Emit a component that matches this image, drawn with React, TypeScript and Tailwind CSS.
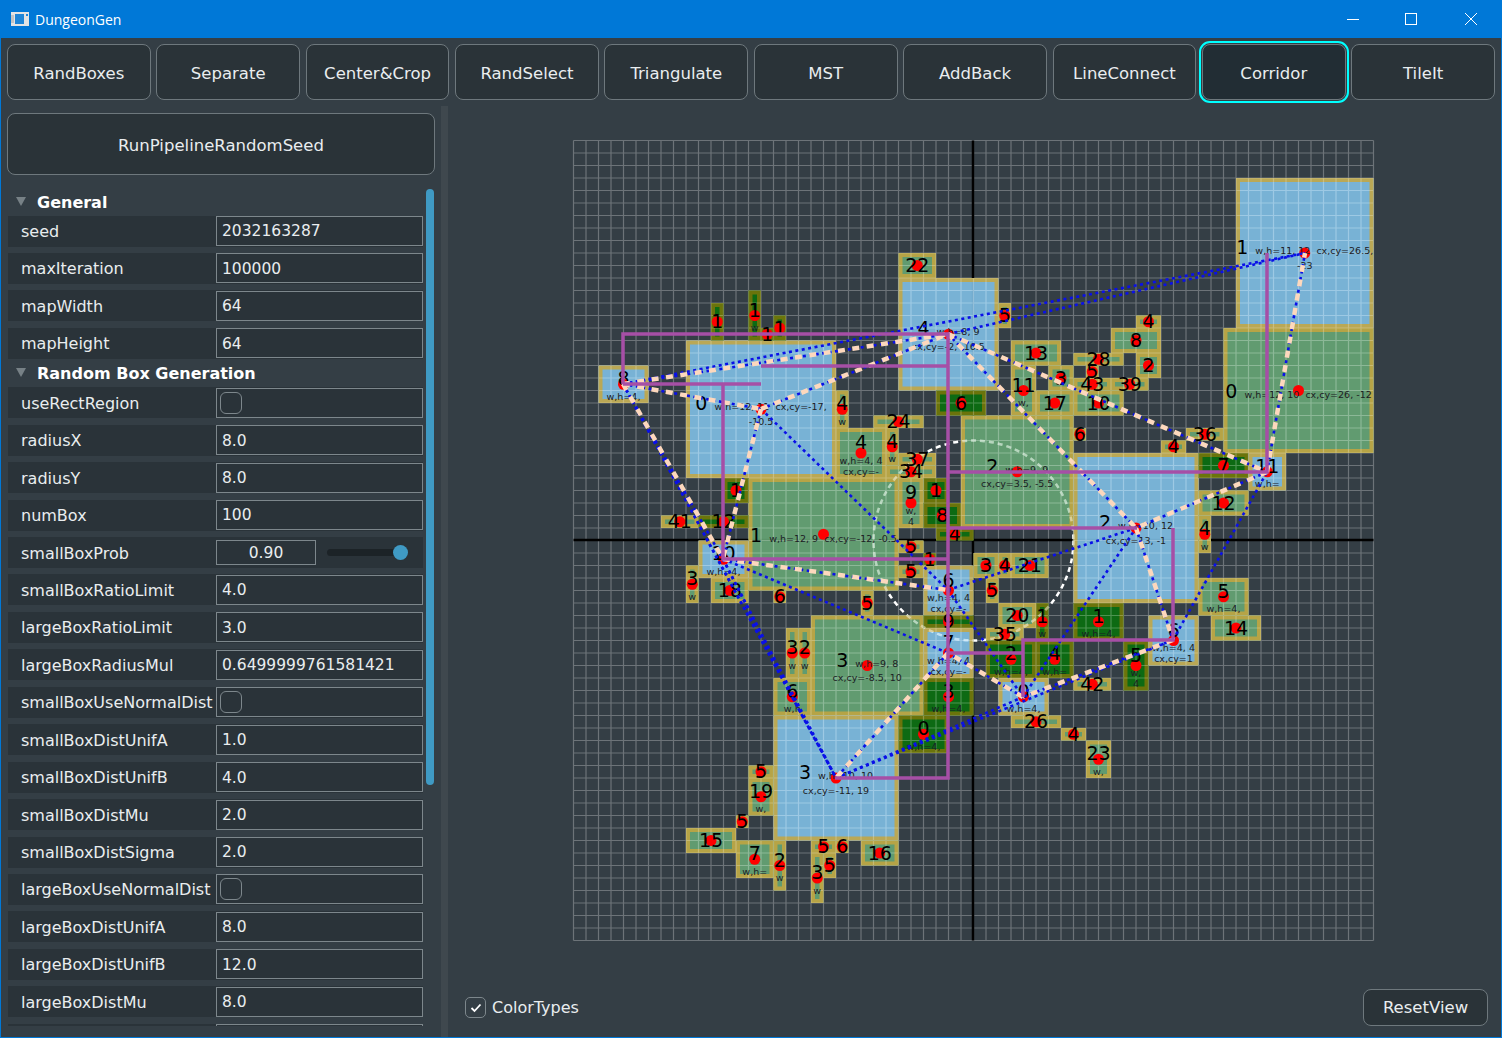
import React from "react";

const U = 12.5;
const X = (u: number) => 973.5 + u * U;
const Y = (u: number) => 540.5 + u * U;

type Kind = "B" | "G" | "D";
type Box = [number, number, number, number, Kind, string, string?, string[]?];

// x, y, w, h in grid cells, kind, big label, small text on the same line, further small lines
const BOXES: Box[] = [
  [21, -29, 11, 12, "B", "1", "w,h=11, 12\u00a0 cx,cy=26.5,", ["-23"]],
  [20, -17, 12, 10, "G", "0", "w,h=12, 10\u00a0 cx,cy=26, -12"],
  [-6, -21, 8, 9, "B", "4", "w,h=8, 9", ["cx,cy=-2, -16.5"]],
  [-23, -16, 12, 11, "B", "0", "w,h=12, 11\u00a0 cx,cy=-17,", ["-10.5"]],
  [-18, -5, 12, 9, "G", "1", "w,h=12, 9\u00a0 cx,cy=-12, -0.5"],
  [-1, -10, 9, 9, "G", "2", "w,h=9, 9", ["cx,cy=3.5, -5.5"]],
  [8, -7, 10, 12, "B", "2", "w,h=10, 12", ["cx,cy=13, -1"]],
  [-13, 6, 9, 8, "G", "3", "w,h=9, 8", ["cx,cy=-8.5, 10"]],
  [-16, 14, 10, 10, "B", "3", "w,h=10, 10", ["cx,cy=-11, 19"]],
  [-6, -23, 3, 2, "G", "22"],
  [-21, -19, 1, 3, "D", "1"],
  [-18, -20, 1, 4, "D", "1", undefined, ["w"]],
  [-17, -17, 1, 1, "D", "1"],
  [-16, -18, 1, 2, "D", "1"],
  [-30, -14, 4, 3, "B", "8", undefined, ["w,h=4,"]],
  [-11, -12, 1, 3, "G", "4", undefined, ["w"]],
  [-8, -10, 4, 1, "G", "24"],
  [-11, -9, 4, 4, "G", "4", undefined, ["w,h=4, 4", "cx,cy=-"]],
  [-7, -9, 1, 3, "G", "4", undefined, ["w"]],
  [-6, -7, 3, 1, "G", "37"],
  [-7, -6, 4, 1, "G", "34"],
  [-4, -5, 2, 2, "D", "1"],
  [-6, -5, 2, 4, "G", "9", undefined, ["w,", "4"]],
  [-4, -3, 3, 2, "D", "8"],
  [-3, -12, 4, 2, "D", "6"],
  [-3, -1, 3, 1, "D", "4"],
  [-20, -5, 2, 2, "D", "1"],
  [-25, -2, 3, 1, "G", "41"],
  [-22, -2, 4, 1, "D", "12"],
  [-22, 0, 4, 3, "B", "10", undefined, ["w,h=4,"]],
  [-23, 2, 1, 3, "G", "3", undefined, ["w"]],
  [-21, 3, 3, 2, "G", "18"],
  [-16, 4, 1, 1, "G", "6"],
  [-9, 4, 1, 2, "G", "5"],
  [-6, 0, 2, 1, "G", "5"],
  [-4, 1, 1, 1, "D", "1"],
  [-6, 2, 2, 1, "G", "5"],
  [-4, 2, 4, 4, "B", "6", undefined, ["w,h=4, 4", "cx,cy=-"]],
  [-4, 6, 4, 1, "D", "9"],
  [-4, 7, 4, 4, "B", "7", undefined, ["w,h=4, 4", "cx,cy=-"]],
  [-4, 11, 4, 3, "D", "3", undefined, ["w,h=4,"]],
  [-6, 14, 4, 3, "D", "0", undefined, ["w,h=4,"]],
  [-15, 7, 1, 4, "G", "3", undefined, ["w"]],
  [-14, 7, 1, 4, "G", "2", undefined, ["w"]],
  [-16, 11, 3, 3, "G", "6", undefined, ["w,h"]],
  [-18, 18, 2, 1, "G", "5"],
  [-18, 19, 2, 3, "G", "19", undefined, ["w,"]],
  [-19, 22, 1, 1, "G", "5"],
  [-23, 23, 4, 2, "G", "15"],
  [-19, 24, 3, 3, "G", "7", undefined, ["w,h="]],
  [-16, 24, 1, 4, "G", "2", undefined, ["w"]],
  [-13, 24, 2, 1, "G", "5"],
  [-11, 24, 1, 1, "G", "6"],
  [-9, 24, 3, 2, "G", "16"],
  [-12, 25, 1, 2, "G", "5"],
  [-13, 25, 1, 4, "G", "3", undefined, ["w"]],
  [2, -19, 1, 2, "G", "5"],
  [3, -16, 4, 2, "G", "13"],
  [3, -14, 2, 4, "G", "11", undefined, ["w,"]],
  [6, -14, 2, 2, "G", "3"],
  [5, -12, 3, 2, "G", "17"],
  [8, -15, 4, 1, "G", "28"],
  [9, -14, 1, 1, "G", "5"],
  [8, -13, 3, 1, "G", "43"],
  [11, -13, 3, 1, "G", "39"],
  [8, -12, 4, 2, "G", "10"],
  [13, -18, 2, 1, "G", "4"],
  [11, -17, 4, 2, "G", "8"],
  [13, -15, 2, 2, "G", "2"],
  [8, -9, 1, 1, "G", "6"],
  [15, -8, 2, 1, "G", "4"],
  [17, -9, 3, 1, "G", "36"],
  [18, -7, 4, 2, "D", "7"],
  [22, -7, 3, 3, "B", "11", undefined, ["w,h="]],
  [18, -4, 4, 2, "G", "12"],
  [18, -2, 1, 3, "G", "4", undefined, ["w"]],
  [0, 1, 2, 2, "G", "3"],
  [2, 1, 1, 2, "G", "4"],
  [3, 1, 3, 2, "G", "21"],
  [1, 3, 1, 2, "G", "5"],
  [2, 5, 3, 2, "G", "20"],
  [5, 5, 1, 3, "D", "1", undefined, ["w"]],
  [1, 7, 3, 1, "G", "35"],
  [8, 5, 4, 3, "D", "1", undefined, ["w,h=4,"]],
  [1, 8, 4, 3, "D", "2", undefined, ["w,h=4,"]],
  [5, 8, 3, 3, "D", "4", undefined, ["w,h="]],
  [2, 11, 4, 3, "B", "0", undefined, ["w,h=4,"]],
  [3, 14, 4, 1, "G", "26"],
  [8, 11, 3, 1, "G", "42"],
  [7, 15, 2, 1, "G", "4"],
  [9, 16, 2, 3, "G", "23", undefined, ["w,"]],
  [12, 8, 2, 4, "D", "5", undefined, ["w,", "4"]],
  [14, 6, 4, 4, "B", "6", undefined, ["w,h=4, 4", "cx,cy=1"]],
  [18, 3, 4, 3, "G", "5", undefined, ["w,h=4,"]],
  [19, 6, 4, 2, "G", "14"],
];

const FILL: Record<Kind, string> = { B: "rgb(130,195,233)", G: "rgb(104,168,118)", D: "rgb(8,113,12)" };
const EDGE: Record<Kind, string> = { B: "rgb(198,166,62)", G: "rgb(198,166,62)", D: "rgb(125,118,10)" };

type Pt = [number, number];
const n8: Pt = [623, 384];
const n0: Pt = [761, 409];
const n4: Pt = [948, 334];
const n1: Pt = [1305, 253];
const n11: Pt = [1267, 472];
const n2: Pt = [1136, 528];
const n6r: Pt = [1173, 640];
const n0b: Pt = [1023, 697];
const n7: Pt = [948, 653];
const n6m: Pt = [948, 590];
const n3: Pt = [836, 778];
const n6l: Pt = [792, 697];
const n10: Pt = [723, 559];

const BLUE_EDGES: [Pt, Pt][] = [
  [n8, n1], [n8, n4], [n4, n1], [n8, n0], [n0, n4], [n0, n10], [n0, n6m], [n8, n10], [n8, n3], [n8, n6l],
  [n10, n3], [n10, n6l], [n6l, n3], [n4, n2], [n4, n11], [n11, n1], [n11, n2], [n2, n6r], [n6r, n0b], [n0b, n7],
  [n7, n3], [n10, n6m], [n10, n7], [n3, n0b], [n3, n6r], [n0b, n2], [n6r, n11], [n6m, n2], [n6m, n0b],
];

const MST_EDGES: [Pt, Pt][] = [
  [n8, n4], [n8, n0], [n0, n4], [n0, n10], [n8, n10], [n4, n2], [n4, n11], [n11, n1], [n11, n2], [n2, n6r],
  [n6r, n0b], [n0b, n7], [n7, n3], [n10, n6m],
];

const CORRIDORS = [
  "M623 384V334H948V778H835",
  "M623 384H761",
  "M761 366H948",
  "M723 384V559H948",
  "M948 472H1267V253",
  "M948 528H1137",
  "M1173 528V640H1023V697",
  "M948 653H1023",
];

function MapView() {
  const ticks = Array.from({ length: 65 }, (_, i) => i - 32);
  const gridPath = ticks.map((t) => `M${X(t)} ${Y(-32)}V${Y(32)}M${X(-32)} ${Y(t)}H${X(32)}`).join("");
  return (
    <svg width={825} height={825} viewBox="560 128 825 825" className="block shrink-0">
      <defs>
        <clipPath id="box-area">
          {BOXES.map(([x, y, w, h], i) => (
            <rect key={i} x={X(x)} y={Y(y)} width={w * U} height={h * U} />
          ))}
        </clipPath>
      </defs>
      <path d={gridPath} stroke="rgba(255,255,255,0.28)" strokeWidth={1.2} fill="none" />
      <path d={`M${X(0) - 0.5} ${Y(-32)}V${Y(32)}M${X(-32)} ${Y(0) - 0.5}H${X(32)}`} stroke="#000" strokeWidth={2.5} />
      <circle cx={X(0)} cy={Y(0)} r={100} fill="none" stroke="#fff" strokeWidth={2.5} strokeDasharray="5 4" />
      {BOXES.map(([x, y, w, h, k], i) => (
        <g key={i}>
          <rect x={X(x)} y={Y(y)} width={w * U} height={h * U} fill={FILL[k]} fillOpacity={0.88} />
          <rect x={X(x) + 2} y={Y(y) + 2} width={w * U - 4} height={h * U - 4} fill="none" stroke={EDGE[k]} strokeOpacity={0.85} strokeWidth={4} />
        </g>
      ))}
      <g clipPath="url(#box-area)">
        <path d={gridPath} stroke="rgba(255,255,255,0.24)" strokeWidth={1.2} fill="none" />
        <circle cx={X(0)} cy={Y(0)} r={100} fill="none" stroke="#fff" strokeOpacity={0.45} strokeWidth={2.5} strokeDasharray="5 4" />
      </g>
      {BOXES.map(([x, y, w, h], i) => (
        <circle key={i} cx={X(x + w / 2)} cy={Y(y + h / 2)} r={5.5} fill="#ff0000" />
      ))}
      {BOXES.map(([x, y, w, h, , big, inline, lines], i) => {
        const cx = X(x + w / 2);
        const cy = Y(y + h / 2);
        const rest = lines ?? [];
        const first = rest.length === 0 ? (inline ? cy + 7.5 : cy + 6.5) : rest.length === 1 ? cy + 1 : cy - 4;
        return (
          <g key={i} textAnchor="middle" fill="#000">
            <text x={cx} y={first} fontSize={19}>
              {big}
              {inline && (
                <tspan fontSize={9.5} dx={7} fill="#1c2024">
                  {inline}
                </tspan>
              )}
            </text>
            {rest.map((line, j) => (
              <text key={j} x={cx} y={first + 14.5 + j * 11} fontSize={9.5} fill="#1c2024">
                {line}
              </text>
            ))}
          </g>
        );
      })}
      {BLUE_EDGES.map(([a, b], i) => (
        <line key={i} x1={a[0]} y1={a[1]} x2={b[0]} y2={b[1]} stroke="#0a10e8" strokeWidth={2.6} strokeDasharray="3 3.5" />
      ))}
      {MST_EDGES.map(([a, b], i) => (
        <line key={i} x1={a[0]} y1={a[1]} x2={b[0]} y2={b[1]} stroke="#fdd8bd" strokeWidth={4.5} strokeDasharray="7 7.5" />
      ))}
      {CORRIDORS.map((d, i) => (
        <path key={i} d={d} fill="none" stroke="#a64fa6" strokeWidth={3.5} />
      ))}
    </svg>
  );
}

const STEPS = ["RandBoxes", "Separate", "Center&Crop", "RandSelect", "Triangulate", "MST", "AddBack", "LineConnect", "Corridor", "TileIt"];

type Row =
  | { type: "header"; label: string }
  | { type: "value"; label: string; value: string }
  | { type: "check"; label: string }
  | { type: "slider"; label: string; value: string };

const ROWS: Row[] = [
  { type: "header", label: "General" },
  { type: "value", label: "seed", value: "2032163287" },
  { type: "value", label: "maxIteration", value: "100000" },
  { type: "value", label: "mapWidth", value: "64" },
  { type: "value", label: "mapHeight", value: "64" },
  { type: "header", label: "Random Box Generation" },
  { type: "check", label: "useRectRegion" },
  { type: "value", label: "radiusX", value: "8.0" },
  { type: "value", label: "radiusY", value: "8.0" },
  { type: "value", label: "numBox", value: "100" },
  { type: "slider", label: "smallBoxProb", value: "0.90" },
  { type: "value", label: "smallBoxRatioLimit", value: "4.0" },
  { type: "value", label: "largeBoxRatioLimit", value: "3.0" },
  { type: "value", label: "largeBoxRadiusMul", value: "0.6499999761581421" },
  { type: "check", label: "smallBoxUseNormalDist" },
  { type: "value", label: "smallBoxDistUnifA", value: "1.0" },
  { type: "value", label: "smallBoxDistUnifB", value: "4.0" },
  { type: "value", label: "smallBoxDistMu", value: "2.0" },
  { type: "value", label: "smallBoxDistSigma", value: "2.0" },
  { type: "check", label: "largeBoxUseNormalDist" },
  { type: "value", label: "largeBoxDistUnifA", value: "8.0" },
  { type: "value", label: "largeBoxDistUnifB", value: "12.0" },
  { type: "value", label: "largeBoxDistMu", value: "8.0" },
  // only the top edge of this row shows above the panel's end
  { type: "value", label: "", value: "" },
];

function PropertyRow({ row }: { row: Row }) {
  if (row.type === "header") {
    return (
      <div className="flex h-[22px] items-start">
        <svg width={10} height={9} viewBox="0 0 10 9" className="ml-[8px] mt-[3px]">
          <path d="M0 0H10L5 9Z" fill="#778186" />
        </svg>
        <span className="ml-[11px] -mt-[3px] font-bold text-[16px] text-white">{row.label}</span>
      </div>
    );
  }
  return (
    <div className="flex h-[31px] mb-[6.45px] shrink-0 items-center bg-[#2a3339]">
      <span className="w-[208px] shrink-0 pl-[13px] pt-[2px] text-[16px] text-[#e9edef]">{row.label}</span>
      {row.type === "value" && (
        <div className="flex h-[30px] w-[207px] items-center border border-[#7d878c] pl-[5px] pt-[2px] text-[15.5px] text-[#e9edef]">{row.value}</div>
      )}
      {row.type === "check" && (
        <div className="flex h-[30px] w-[207px] items-center border border-[#7d878c] pl-[3px]">
          <div className="h-[22px] w-[22px] rounded-[6px] border border-[#7d878c]" />
        </div>
      )}
      {row.type === "slider" && (
        <div className="flex w-[207px] items-center">
          <div className="flex h-[25px] w-[100px] items-center justify-center border border-[#7d878c] pt-[2px] text-[15.5px] text-[#e9edef]">{row.value}</div>
          <div className="relative ml-[11px] h-[7px] w-[80px] rounded-full bg-[#1c2327]">
            <div className="absolute -right-[1px] -top-[4px] h-[15px] w-[15px] rounded-full bg-[#3f9ac4]" />
          </div>
        </div>
      )}
    </div>
  );
}

export default function App() {
  return (
    <div className="flex h-[1038px] w-[1502px] flex-col overflow-hidden border-x border-b border-[#0078d7] bg-[#343e45] font-['DejaVu_Sans',sans-serif]">
      <div className="-mx-px flex h-[38px] shrink-0 items-center bg-[#0078d7] pl-[11px]">
        <svg width={18} height={14} viewBox="0 0 18 14">
          <rect width={18} height={14} fill="#e4e4e4" />
          <rect x={4} y={2} width={9} height={10} fill="#1f86d8" />
          <rect x={0} y={3} width={3} height={8} fill="#c4c4c4" />
          <rect x={15} y={2} width={2} height={2} fill="#1f86d8" />
        </svg>
        <span className="ml-[6px] font-['Open_Sans',sans-serif] text-[14px] text-white">DungeonGen</span>
        <div className="ml-auto flex items-center">
          <svg width={130} height={14} viewBox="0 0 130 14" className="mr-[25px]" fill="none" stroke="#fff" strokeWidth={1}>
            <path d="M0 7.5H12" />
            <rect x={58.5} y={1.5} width={11} height={11} />
            <path d="M118 1L130 13M130 1L118 13" />
          </svg>
        </div>
      </div>

      <div className="grid shrink-0 grid-cols-10 gap-[5.7px] px-[6px] pt-[6px]">
        {STEPS.map((s) => (
          <div
            key={s}
            className={
              s === "Corridor"
                ? "flex h-[56px] items-center justify-center rounded-[8px] border-[1.5px] border-[#6e787d] bg-[#222d34] pt-[4px] text-[16.5px] text-[#e9edef] outline-[2.5px] outline-offset-[1px] outline-[#0ff]"
                : "flex h-[56px] items-center justify-center rounded-[8px] border-[1.5px] border-[#6e787d] bg-[#2a3338] pt-[4px] text-[16.5px] text-[#e9edef]"
            }
          >
            {s}
          </div>
        ))}
      </div>

      <div className="mt-[6px] flex min-h-0 flex-1">
        <div className="ml-[6px] w-[428px] shrink-0 pt-[7px]">
          <div className="flex h-[62px] items-center justify-center rounded-[8px] border-[1.5px] border-[#6e787d] bg-[#2a3338] pt-[5px] text-[16.5px] text-[#e9edef]">
            RunPipelineRandomSeed
          </div>
          <div className="mt-[14px] flex h-[837px] overflow-hidden pl-[1px]">
            <div className="w-[415px] shrink-0 pt-[4.5px]">
              {ROWS.map((r, i) => (
                <PropertyRow key={i} row={r} />
              ))}
            </div>
            <div className="ml-[3px] h-[596px] w-[8px] rounded-full bg-[#3f9ac4]" />
          </div>
        </div>
        <div className="ml-[6px] w-[7px] shrink-0 bg-[#3f484e]" />
        <div className="flex min-w-0 flex-1 flex-col pt-[22px]">
          <div className="ml-[112px]">
            <MapView />
          </div>
          <div className="mt-[36px] flex items-center justify-between pl-[17px] pr-[13px]">
            <div className="flex items-center">
              <div className="flex h-[21px] w-[21px] items-center justify-center rounded-[5px] border border-[#7d878c]">
                <svg width={12} height={10} viewBox="0 0 12 10" fill="none" stroke="#fff" strokeWidth={1.8}>
                  <path d="M1.5 5L4.5 8L10.5 1.5" />
                </svg>
              </div>
              <span className="ml-[6px] text-[16px] text-[#e9edef]">ColorTypes</span>
            </div>
            <div className="flex h-[37px] w-[125px] items-center justify-center rounded-[8px] border-[1.5px] border-[#6e787d] bg-[#2a3338] pt-[1px] text-[16.5px] text-[#e9edef]">
              ResetView
            </div>
          </div>
        </div>
      </div>
    </div>
  );
}
